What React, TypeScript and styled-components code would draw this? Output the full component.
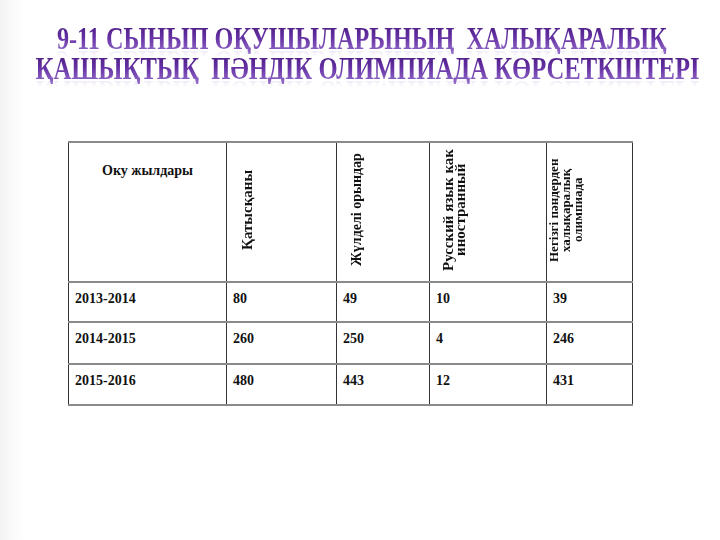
import React from "react";
import styled, { createGlobalStyle } from "styled-components";

const Global = createGlobalStyle`
  html, body { margin: 0; padding: 0; background: #fff; }
  #root { width: 720px; height: 540px; }
`;

const Page = styled.div`
  width: 720px;
  height: 540px;
  overflow: hidden;
  background: linear-gradient(90deg, #f3f3f3 0px, #fbfbfb 14px, #ffffff 24px);
  display: flex;
  flex-direction: column;
  align-items: flex-start;
`;

const Title = styled.div`
  align-self: stretch;
  display: flex;
  flex-direction: column;
  align-items: center;
  padding-top: 24px;
  height: 141px;
  box-sizing: border-box;
`;

const TitleLine = styled.div<{ $shift: number; $scale: number }>`
  font-family: "Liberation Serif", "Times New Roman", serif;
  font-weight: 700;
  font-size: 31px;
  line-height: 30px;
  height: 30px;
  white-space: pre;
  color: #6a2fa3;
  background: linear-gradient(180deg, #4a1c80 0%, #6530a3 45%, #9670cc 100%);
  -webkit-background-clip: text;
  background-clip: text;
  -webkit-text-fill-color: transparent;
  transform: translateX(${(p) => p.$shift}px) scaleX(${(p) => p.$scale});
  -webkit-box-reflect: below -8px linear-gradient(transparent 62%, rgba(255, 255, 255, 0.22));
`;

const Table = styled.table`
  margin-left: 68px;
  border-collapse: collapse;
  table-layout: fixed;
  width: 564px;
  font-family: "Liberation Serif", "Times New Roman", serif;
  font-weight: 700;
  color: #111;
`;

const Col = styled.col<{ $w: number }>`
  width: ${(p) => p.$w}px;
`;

const HeadCell = styled.th<{ $pl: number }>`
  height: 140px;
  box-sizing: border-box;
  padding: 0 0 0 ${(p) => p.$pl}px;
  border-top: 2px solid #8a8a8a;
  border-bottom: 2px solid #8a8a8a;
  border-left: 1px solid #333;
  border-right: 1px solid #333;
  vertical-align: middle;
  text-align: left;
`;

const PlainHead = styled.th`
  height: 140px;
  box-sizing: border-box;
  padding: 20px 4px 0 4px;
  border-top: 2px solid #8a8a8a;
  border-bottom: 2px solid #8a8a8a;
  border-left: 1px solid #333;
  border-right: 1px solid #333;
  vertical-align: top;
  text-align: center;
  font-size: 14px;
  line-height: 16px;
`;

const Vertical = styled.div<{ $size: number }>`
  writing-mode: vertical-rl;
  transform: rotate(180deg);
  height: 134px;
  text-align: center;
  font-size: ${(p) => p.$size}px;
  line-height: 12px;
  display: inline-block;
`;

const Cell = styled.td<{ $h: number }>`
  height: ${(p) => p.$h}px;
  box-sizing: border-box;
  padding: 8px 6px 0 6px;
  vertical-align: top;
  border-bottom: 2px solid #8a8a8a;
  border-left: 1px solid #333;
  border-right: 1px solid #333;
  font-size: 14px;
  line-height: 16px;
`;

const rows = [
  { h: 40, v: ["2013-2014", "80", "49", "10", "39"] },
  { h: 42, v: ["2014-2015", "260", "250", "4", "246"] },
  { h: 41, v: ["2015-2016", "480", "443", "12", "431"] },
];

export default function App() {
  return (
    <Page>
      <Global />
      <Title>
        <TitleLine $shift={2} $scale={0.78}>
          {"9-11 СЫНЫП ОҚУШЫЛАРЫНЫҢ  ХАЛЫҚАРАЛЫҚ"}
        </TitleLine>
        <TitleLine $shift={8} $scale={0.795}>
          {"ҚАШЫҚТЫҚ  ПӘНДІК ОЛИМПИАДА КӨРСЕТКШТЕРІ"}
        </TitleLine>
      </Title>
      <Table>
        <colgroup>
          <Col $w={158} />
          <Col $w={110} />
          <Col $w={93} />
          <Col $w={117} />
          <Col $w={86} />
        </colgroup>
        <thead>
          <tr>
            <PlainHead>Оку жылдары</PlainHead>
            <HeadCell $pl={14}>
              <Vertical $size={15}>Қатысқаны</Vertical>
            </HeadCell>
            <HeadCell $pl={14}>
              <Vertical $size={14}>Жүлделі орындар</Vertical>
            </HeadCell>
            <HeadCell $pl={12}>
              <Vertical $size={15}>
                Русский язык как
                <br />
                иностранный
              </Vertical>
            </HeadCell>
            <HeadCell $pl={1}>
              <Vertical $size={13}>
                Негізгі пәндерден
                <br />
                халықаралық
                <br />
                олимпиада
              </Vertical>
            </HeadCell>
          </tr>
        </thead>
        <tbody>
          {rows.map((r) => (
            <tr key={r.v[0]}>
              {r.v.map((c, i) => (
                <Cell key={i} $h={r.h}>
                  {c}
                </Cell>
              ))}
            </tr>
          ))}
        </tbody>
      </Table>
    </Page>
  );
}
